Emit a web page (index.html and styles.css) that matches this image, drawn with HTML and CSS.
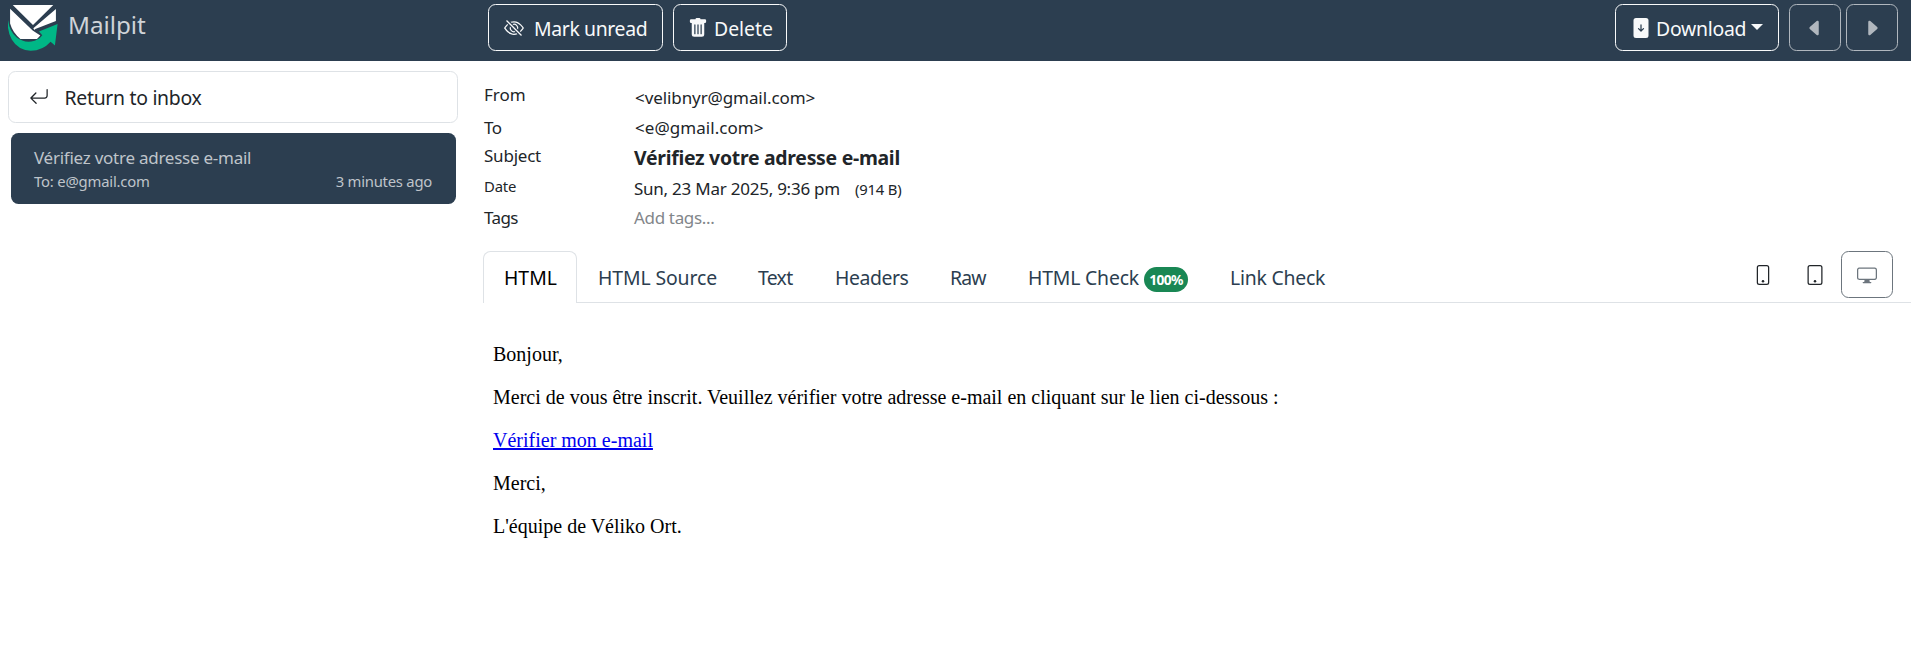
FILE: index.html
```
<!DOCTYPE html>
<html lang="en">
<head>
<meta charset="utf-8">
<title>Mailpit</title>
<link rel="stylesheet" href="styles.css">
</head>
<body>
<header class="navbar">
  <a class="brand">
    <svg class="logo" viewBox="0 0 150 140">
      <path fill="#fff" d="M14 0H136L75 60ZM6 11 74 77 97 92 87 102H37Q14 84 6 56ZM144 12V48L82 72 79 75 76 70Z"/>
      <path fill="#00b786" d="M0 46Q4 80 26 98Q45 113 70 110Q92 106 103 91L93 80L149 57L141 122L128 111Q104 138 68 138Q30 136 11 104Q-4 76 0 46Z"/>
    </svg>
    <span class="brand-name">Mailpit</span>
  </a>
  <div class="actions">
    <button class="btn btn-unread"><svg class="icon" viewBox="0 0 16 16"><path d="M13.359 11.238C15.06 9.72 16 8 16 8s-3-5.5-8-5.5a7 7 0 0 0-2.79.588l.77.771A6 6 0 0 1 8 3.5c2.12 0 3.879 1.168 5.168 2.457A13 13 0 0 1 14.828 8q-.086.13-.195.288c-.335.48-.83 1.12-1.465 1.755q-.247.248-.517.486z"/><path d="M11.297 9.176a3.5 3.5 0 0 0-4.474-4.474l.823.823a2.5 2.5 0 0 1 2.829 2.829zm-2.943 1.299.822.822a3.5 3.5 0 0 1-4.474-4.474l.823.823a2.5 2.5 0 0 0 2.829 2.829"/><path d="M3.35 5.47q-.27.24-.518.487A13 13 0 0 0 1.172 8l.195.288c.335.48.83 1.12 1.465 1.755C4.121 11.332 5.881 12.5 8 12.5c.716 0 1.39-.133 2.02-.36l.77.772A7 7 0 0 1 8 13.5C3 13.5 0 8 0 8s.939-1.721 2.641-3.238l.708.709zm10.296 8.884-12-12 .708-.708 12 12z"/></svg><span>Mark unread</span></button>
    <button class="btn btn-delete"><svg class="icon" viewBox="0 0 16 16"><path d="M2.5 1a1 1 0 0 0-1 1v1a1 1 0 0 0 1 1H3v9a2 2 0 0 0 2 2h6a2 2 0 0 0 2-2V4h.5a1 1 0 0 0 1-1V2a1 1 0 0 0-1-1H10a1 1 0 0 0-1-1H7a1 1 0 0 0-1 1zm3 4a.5.5 0 0 1 .5.5v7a.5.5 0 0 1-1 0v-7a.5.5 0 0 1 .5-.5M8 5a.5.5 0 0 1 .5.5v7a.5.5 0 0 1-1 0v-7A.5.5 0 0 1 8 5m3 .5v7a.5.5 0 0 1-1 0v-7a.5.5 0 0 1 1 0"/></svg><span>Delete</span></button>
  </div>
  <div class="actions actions-end">
    <button class="btn btn-download"><svg class="icon" viewBox="0 0 16 16"><path d="M12 0H4a2 2 0 0 0-2 2v12a2 2 0 0 0 2 2h8a2 2 0 0 0 2-2V2a2 2 0 0 0-2-2M8 5a.5.5 0 0 1 .5.5v3.793l1.146-1.147a.5.5 0 0 1 .708.708l-2 2a.5.5 0 0 1-.708 0l-2-2a.5.5 0 1 1 .708-.708L7.5 9.293V5.5A.5.5 0 0 1 8 5"/></svg><span>Download</span><i class="caret"></i></button>
    <button class="btn btn-nav"><svg class="icon" viewBox="0 0 16 16"><path d="m3.86 8.753 5.482 4.796c.646.566 1.658.106 1.658-.753V3.204a1 1 0 0 0-1.659-.753l-5.48 4.796a1 1 0 0 0 0 1.506z"/></svg></button>
    <button class="btn btn-nav"><svg class="icon" viewBox="0 0 16 16"><path d="m12.14 8.753-5.482 4.796c-.646.566-1.658.106-1.658-.753V3.204a1 1 0 0 1 1.659-.753l5.48 4.796a1 1 0 0 1 0 1.506z"/></svg></button>
  </div>
</header>
<div class="layout">
  <aside class="sidebar">
    <a class="return"><svg class="icon" viewBox="0 0 16 16"><path d="M14.5 1.5a.5.5 0 0 1 .5.5v4.8a2.5 2.5 0 0 1-2.5 2.5H2.707l3.347 3.346a.5.5 0 0 1-.708.708l-4.2-4.2a.5.5 0 0 1 0-.708l4-4a.5.5 0 1 1 .708.708L2.707 8.3H12.5A1.5 1.5 0 0 0 14 6.8V2a.5.5 0 0 1 .5-.5"/></svg><span>Return to inbox</span></a>
    <a class="message">
      <div class="message-subject">Vérifiez votre adresse e-mail</div>
      <div class="message-meta"><span class="message-to">To: e@gmail.com</span><span class="message-age">3 minutes ago</span></div>
    </a>
  </aside>
  <main class="content">
    <dl class="headers">
      <dt class="label-from">From</dt><dd class="address-from">&lt;velibnyr@gmail.com&gt;</dd>
      <dt class="label-tight">To</dt><dd class="address-to">&lt;e@gmail.com&gt;</dd>
      <dt class="label-subject">Subject</dt><dd class="subject">Vérifiez votre adresse e-mail</dd>
      <dt class="label-date">Date</dt><dd class="date"><span>Sun, 23 Mar 2025, 9:36 pm</span><small>(914 B)</small></dd>
      <dt class="label-tight">Tags</dt><dd class="tags">Add tags...</dd>
    </dl>
    <nav class="tabs">
      <a class="tab tab-html active">HTML</a>
      <a class="tab tab-source">HTML Source</a>
      <a class="tab tab-text">Text</a>
      <a class="tab tab-headers">Headers</a>
      <a class="tab tab-raw">Raw</a>
      <a class="tab tab-check">HTML Check<span class="badge">100%</span></a>
      <a class="tab tab-link">Link Check</a>
      <div class="sizes">
        <button class="size"><svg class="icon" viewBox="0 0 16 16"><path d="M11 1a1 1 0 0 1 1 1v12a1 1 0 0 1-1 1H5a1 1 0 0 1-1-1V2a1 1 0 0 1 1-1zM5 0a2 2 0 0 0-2 2v12a2 2 0 0 0 2 2h6a2 2 0 0 0 2-2V2a2 2 0 0 0-2-2z"/><path d="M8 14a1 1 0 1 0 0-2 1 1 0 0 0 0 2"/></svg></button>
        <button class="size"><svg class="icon" viewBox="0 0 16 16"><path d="M12 1a1 1 0 0 1 1 1v12a1 1 0 0 1-1 1H4a1 1 0 0 1-1-1V2a1 1 0 0 1 1-1zM4 0a2 2 0 0 0-2 2v12a2 2 0 0 0 2 2h8a2 2 0 0 0 2-2V2a2 2 0 0 0-2-2z"/><path d="M8 14a1 1 0 1 0 0-2 1 1 0 0 0 0 2"/></svg></button>
        <button class="size selected"><svg class="icon" viewBox="0 0 16 16"><path d="M0 4s0-2 2-2h12s2 0 2 2v6s0 2-2 2h-4q0 1 .25 1.5H11a.5.5 0 0 1 0 1H5a.5.5 0 0 1 0-1h.75Q6 13 6 12H2s-2 0-2-2zm1.398-.855a.76.76 0 0 0-.254.302A1.5 1.5 0 0 0 1 4.01V10c0 .325.078.502.145.602q.105.156.302.254a1.5 1.5 0 0 0 .538.143L2.01 11H14c.325 0 .502-.078.602-.145a.76.76 0 0 0 .254-.302 1.5 1.5 0 0 0 .143-.538L15 9.99V4c0-.325-.078-.502-.145-.602a.76.76 0 0 0-.302-.254A1.5 1.5 0 0 0 13.99 3H2c-.325 0-.502.078-.602.145"/></svg></button>
      </div>
    </nav>
    <article class="mail">
      <p>Bonjour,</p>
      <p>Merci de vous être inscrit. Veuillez vérifier votre adresse e-mail en cliquant sur le lien ci-dessous :</p>
      <p><a class="mail-link" href="#">Vérifier mon e-mail</a></p>
      <p>Merci,</p>
      <p>L'équipe de Véliko Ort.</p>
    </article>
  </main>
</div>
</body>
</html>
```
FILE: styles.css
```
* { box-sizing: border-box; }
body {
  margin: 0;
  height: 667px;
  overflow: hidden;
  background: #fff;
  color: #212529;
  font: 19.4px/30px "Noto Sans", "Open Sans", sans-serif;
  white-space: nowrap;
}
.icon { width: 20px; height: 20px; fill: currentColor; flex: none; display: block; }

.navbar { display: flex; height: 61px; background: #2c3e50; }
.brand { display: flex; width: 488px; padding: 5px 0 0 8px; }
.logo { width: 50px; height: 46.5px; }
.brand-name { margin-left: 10px; font-size: 24.25px; line-height: 40px; letter-spacing: -0.05px; color: #d0d4d8; }
.actions { display: flex; gap: 10px; padding-top: 4px; }
.actions-end { margin-left: auto; padding-right: 13px; gap: 5px; }
.btn {
  display: flex;
  align-items: center;
  height: 47px;
  padding: 0;
  border: 1px solid #f8f9fa;
  border-radius: 7.5px;
  background: none;
  color: #f8f9fa;
  font: inherit;
}
.btn span { padding-top: 2px; }
.btn-unread { width: 175px; padding-left: 15px; letter-spacing: -0.36px; }
.btn-unread span { margin-left: 10px; }
.btn-delete { width: 114px; padding-left: 14px; }
.btn-delete span { margin-left: 6px; }
.btn-download { width: 164px; margin-right: 5px; padding-left: 15px; letter-spacing: -0.26px; }
.btn-download span { margin-left: 5px; }
.caret { margin: -2px 0 0 5px; border: 6px solid transparent; border-top-color: currentColor; border-bottom: 0; }
.btn-nav { width: 52px; justify-content: center; opacity: 0.65; }

.layout { display: flex; }
.sidebar { width: 483px; padding: 10px 25px 0 8px; }
.return {
  display: flex;
  align-items: center;
  height: 52px;
  padding-left: 20px;
  border: 1px solid #dee2e6;
  border-radius: 7.5px;
  letter-spacing: -0.29px;
}
.return span { margin-left: 15.5px; padding-top: 2px; }
.message {
  display: block;
  height: 71px;
  margin: 10px 2px 0 3px;
  padding: 13px 24px 0 23px;
  border-radius: 7.5px;
  background: #2c3e50;
  color: #bfc4ca;
  line-height: 24px;
}
.message-subject { font-size: 17px; line-height: 23px; letter-spacing: -0.25px; }
.message-meta { display: flex; justify-content: space-between; font-size: 14.85px; letter-spacing: -0.2px; }
.message-age { letter-spacing: -0.25px; }

.content { flex: 1; }
.headers {
  display: grid;
  grid-template-columns: 150px auto;
  grid-auto-rows: 30px;
  margin: 0;
  padding: 22px 0 18px 1px;
  font-size: 17px;
}
.headers dd { margin: 0; }
.label-from { margin-top: -3px; }
.label-tight { letter-spacing: -0.6px; }
.label-subject { margin-top: -2px; letter-spacing: -0.22px; }
.label-date { margin-top: -2px; font-size: 14.85px; letter-spacing: -0.15px; }
.address-from { padding-left: 1px; letter-spacing: -0.09px; }
.address-to { padding-left: 1px; letter-spacing: 0.05px; }
.subject { font-size: 19.4px; font-weight: 700; letter-spacing: -0.27px; }
.date { display: flex; padding-top: 1px; letter-spacing: -0.24px; }
.date small { margin-left: 15px; font-size: 14.85px; letter-spacing: -0.18px; }
.tags { color: #82868a; letter-spacing: -0.34px; }

.tabs { display: flex; height: 52px; border-bottom: 1px solid #dee2e6; color: #2c3e50; line-height: 53px; }
.tab { flex: none; height: 52px; padding-left: 21px; }
.tab.active {
  padding-left: 20px;
  border: 1px solid #dee2e6;
  border-bottom: 0;
  border-radius: 7.5px 7.5px 0 0;
  background: #fff;
  color: #000;
  line-height: 51px;
}
.tab-html { width: 94px; }
.tab-source { width: 160px; letter-spacing: -0.1px; }
.tab-text { width: 77px; letter-spacing: -0.7px; }
.tab-headers { width: 115px; letter-spacing: -0.43px; }
.tab-raw { width: 77px; letter-spacing: -0.8px; }
.tab-check { display: flex; align-items: center; width: 202px; padding-left: 22px; letter-spacing: -0.18px; }
.tab-link { padding-left: 22px; letter-spacing: -0.22px; }
.badge {
  width: 44px;
  height: 25px;
  margin: 4px 0 0 5px;
  border-radius: 12.5px;
  background: #198754;
  color: #fff;
  font-size: 13.8px;
  font-weight: 700;
  line-height: 26px;
  letter-spacing: -0.7px;
  text-align: center;
}
.sizes { display: flex; margin-left: auto; padding-right: 18px; }
.size {
  display: grid;
  place-items: center;
  width: 52px;
  height: 47px;
  padding: 0;
  border: 1px solid transparent;
  border-radius: 7.5px;
  background: none;
  color: #212529;
}
.selected { border-color: #6c757d; color: #6c757d; }

.mail { padding: 40px 10px 0; color: #000; font: 20px/23px "Liberation Serif", "Times New Roman", serif; }
.mail p { margin: 0 0 20px; }
.mail-link { color: #00e; }
```
